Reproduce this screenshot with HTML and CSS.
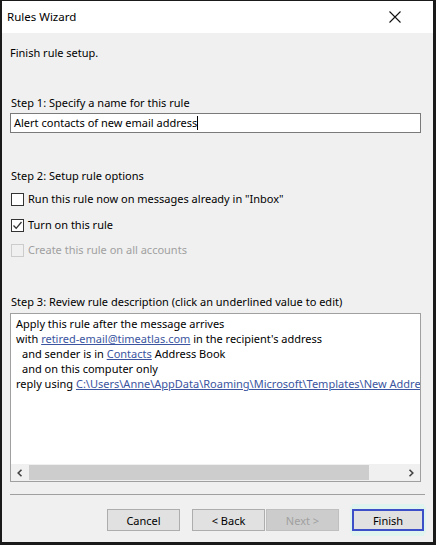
FILE: index.html
```html
<!DOCTYPE html>
<html>

<head>
    <meta charset="utf-8">
    <title>Rules Wizard</title>
    <link rel="stylesheet" href="styles.css">
</head>

<body>
    <div class="window">
        <div class="titlebar">
            <span class="title">Rules Wizard</span>
            <svg class="close" width="12" height="12" viewBox="0 0 12 12">
                <path d="M0.5 0.5 L11.5 11.5 M11.5 0.5 L0.5 11.5" stroke="#111" stroke-width="1.1" fill="none"/>
            </svg>
        </div>
        <div class="content">
            <div class="heading">Finish rule setup.</div>

            <div class="step step1">Step 1: Specify a name for this rule</div>
            <div class="input">Alert contacts of new email address<span class="caret"></span></div>

            <div class="step step2">Step 2: Setup rule options</div>
            <ul class="options">
                <li>
                    <span class="check"></span>
                    <span>Run this rule now on messages already in "Inbox"</span>
                </li>
                <li>
                    <span class="check checked">
                        <svg width="11" height="11" viewBox="0 0 11 11">
                            <path d="M1.5 5.5 L4.2 8.3 L9.5 2" stroke="#333" stroke-width="1.3" fill="none"/>
                        </svg>
                    </span>
                    <span>Turn on this rule</span>
                </li>
                <li class="disabled">
                    <span class="check"></span>
                    <span>Create this rule on all accounts</span>
                </li>
            </ul>

            <div class="step step3">Step 3: Review rule description (click an underlined value to edit)</div>
            <div class="desc">
                <div class="desc-text">
                    <div>Apply this rule after the message arrives</div>
                    <div>with <a href="javascript:void(0)">retired-email@timeatlas.com</a> in the recipient's address</div>
                    <div class="indent">and sender is in <a href="javascript:void(0)">Contacts</a> Address Book</div>
                    <div class="indent">and on this computer only</div>
                    <div>reply using <a href="javascript:void(0)">C:\Users\Anne\AppData\Roaming\Microsoft\Templates\New Address.oft</a></div>
                </div>
                <div class="hscroll">
                    <span class="arrow">
                        <svg width="8" height="8" viewBox="0 0 8 8"><path d="M5.5 0.8 L2.2 4 L5.5 7.2" stroke="#444" stroke-width="1.6" fill="none"/></svg>
                    </span>
                    <span class="thumb"></span>
                    <span class="arrow">
                        <svg width="8" height="8" viewBox="0 0 8 8"><path d="M2.5 0.8 L5.8 4 L2.5 7.2" stroke="#444" stroke-width="1.6" fill="none"/></svg>
                    </span>
                </div>
            </div>

            <div class="separator"></div>

            <div class="buttons">
                <button class="btn cancel">Cancel</button>
                <button class="btn back">&lt; Back</button>
                <button class="btn next" disabled>Next &gt;</button>
                <button class="btn finish">Finish</button>
            </div>
        </div>
    </div>
</body>

</html>
```

FILE: styles.css
```css
*{
    padding: 0;
    margin: 0;
    box-sizing: border-box;
}
ul{
    list-style: none;
}
html,body{
    width: 100%;
    height: 100%;
}
body{
    font-family: "Noto Sans", "Open Sans", sans-serif;
    font-size: 11px;
    color: #000;
    background-color: #1a1a1a;
}
.window{
    width: 436px;
    height: 545px;
    border-style: solid;
    border-color: #1a1a1a;
    border-width: 1px 3px 3px 2px;
    background-color: #f0f0f0;
    display: flex;
    flex-direction: column;
}
.titlebar{
    height: 32px;
    background-color: #fff;
    display: flex;
    align-items: center;
    justify-content: space-between;
    padding: 0 32px 0 5px;
}
.title{
    font-size: 11.5px;
    margin-top: -1px;
}
.content{
    flex: 1;
    padding: 12px 9px 0 8px;
    display: flex;
    flex-direction: column;
    line-height: 16px;
}
.step{
    padding-left: 1px;
}
.step1{
    margin-top: 34px;
}
.input{
    margin-top: 2px;
    height: 20px;
    width: 411px;
    background-color: #fff;
    border: 1px solid #7a7a7a;
    padding: 1px 3px;
    line-height: 16px;
}
.caret{
    display: inline-block;
    width: 1px;
    height: 14px;
    background-color: #000;
    vertical-align: -3px;
}
.step2{
    margin-top: 35px;
}
.options{
    margin-top: 7px;
}
.options li{
    display: flex;
    align-items: center;
    gap: 4px;
    height: 16px;
    padding-left: 1px;
    margin-bottom: 10px;
}
.options li:last-child{
    margin-bottom: 0;
}
.check{
    width: 13px;
    height: 13px;
    border: 1px solid #333;
    background-color: #fff;
    display: flex;
    align-items: center;
    justify-content: center;
}
.options li.disabled{
    color: #a0a0a0;
    margin-top: -1px;
}
.options li.disabled .check{
    border-color: #cccccc;
    background-color: #f0f0f0;
}
.step3{
    margin-top: 36px;
}
.desc{
    margin-top: 3px;
    width: 411px;
    height: 169px;
    background-color: #fff;
    border: 1px solid #a0a0a0;
    display: flex;
    flex-direction: column;
    overflow: hidden;
}
.desc-text{
    flex: 1;
    padding: 2px 0 0 5px;
    line-height: 15px;
    white-space: nowrap;
    overflow: hidden;
}
.desc-text .indent{
    padding-left: 6px;
}
.desc-text a{
    color: #3b55a0;
    text-decoration: underline;
}
.hscroll{
    height: 17px;
    display: flex;
    align-items: center;
    background-color: #f0f0f0;
}
.hscroll .arrow{
    width: 18px;
    height: 17px;
    display: flex;
    align-items: center;
    justify-content: center;
}
.hscroll .thumb{
    width: 340px;
    height: 15px;
    background-color: #cdcdcd;
}
.hscroll .arrow:last-child{
    margin-left: auto;
}
.separator{
    margin-top: 12px;
    width: 415px;
    height: 1px;
    background-color: #a0a0a0;
}
.buttons{
    margin-top: 14px;
    display: flex;
    justify-content: flex-end;
}
.btn{
    font-family: "Noto Sans", "Open Sans", sans-serif;
    font-size: 11px;
    width: 73px;
    height: 22px;
    background-color: #e1e1e1;
    border: 1px solid #adadad;
    color: #000;
}
.back{
    margin-left: 12px;
}
.next{
    margin-left: 1px;
    background-color: #cccccc;
    border-color: #bfbfbf;
    color: #a0a0a0;
}
.finish{
    margin-left: 13px;
    width: 72px;
    border: 2px solid #3c4fc8;
    box-shadow: 0 0 0 2px #dff4ef, 0 -5px 0 0 #dff4ef, 0 5px 0 0 #dff4ef;
}
```
